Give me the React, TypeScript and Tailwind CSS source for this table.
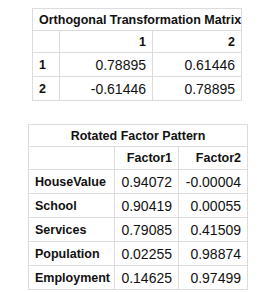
const matrix = [
  { label: '1', values: ['0.78895', '0.61446'] },
  { label: '2', values: ['-0.61446', '0.78895'] },
];

const pattern = [
  { label: 'HouseValue', values: ['0.94072', '-0.00004'] },
  { label: 'School', values: ['0.90419', '0.00055'] },
  { label: 'Services', values: ['0.79085', '0.41509'] },
  { label: 'Population', values: ['0.02255', '0.98874'] },
  { label: 'Employment', values: ['0.14625', '0.97499'] },
];

const cell = 'border border-[#dcdce0] px-[6px] py-0 leading-[16px] whitespace-nowrap';
const head = `${cell} font-bold text-[12.5px]`;

export default function App() {
  return (
    <div className="w-[276px] h-[292px] bg-white flex flex-col items-center pt-[8px] text-[14px] text-[#111] font-['Liberation_Sans',Arial,sans-serif]">
      {/* Orthogonal Transformation Matrix */}
      <table className="border-collapse table-fixed w-[209px] ml-[-2px]">
        <colgroup>
          <col className="w-[27px]" />
          <col className="w-[93px]" />
          <col className="w-[89px]" />
        </colgroup>
        <thead>
          <tr className="h-[22px]">
            <th colSpan={3} className={`${head} text-center`}>
              Orthogonal Transformation Matrix
            </th>
          </tr>
          <tr className="h-[22px]">
            <th className={cell}></th>
            <th className={`${head} text-right`}>1</th>
            <th className={`${head} text-right`}>2</th>
          </tr>
        </thead>
        <tbody>
          {matrix.map((r) => (
            <tr key={r.label} className="h-[24px]">
              <th className={`${head} text-left`}>{r.label}</th>
              {r.values.map((v, i) => (
                <td key={i} className={`${cell} text-right`}>{v}</td>
              ))}
            </tr>
          ))}
        </tbody>
      </table>

      {/* Rotated Factor Pattern */}
      <table className="border-collapse table-fixed w-[219px] mt-[23px]">
        <colgroup>
          <col className="w-[86px]" />
          <col className="w-[64px]" />
          <col className="w-[69px]" />
        </colgroup>
        <thead>
          <tr className="h-[22px]">
            <th colSpan={3} className={`${head} text-center`}>
              Rotated Factor Pattern
            </th>
          </tr>
          <tr className="h-[23px]">
            <th className={cell}></th>
            <th className={`${head} text-right`}>Factor1</th>
            <th className={`${head} text-right`}>Factor2</th>
          </tr>
        </thead>
        <tbody>
          {pattern.map((r) => (
            <tr key={r.label} className="h-[24px]">
              <th className={`${head} text-left`}>{r.label}</th>
              {r.values.map((v, i) => (
                <td key={i} className={`${cell} text-right`}>{v}</td>
              ))}
            </tr>
          ))}
        </tbody>
      </table>
    </div>
  );
}
